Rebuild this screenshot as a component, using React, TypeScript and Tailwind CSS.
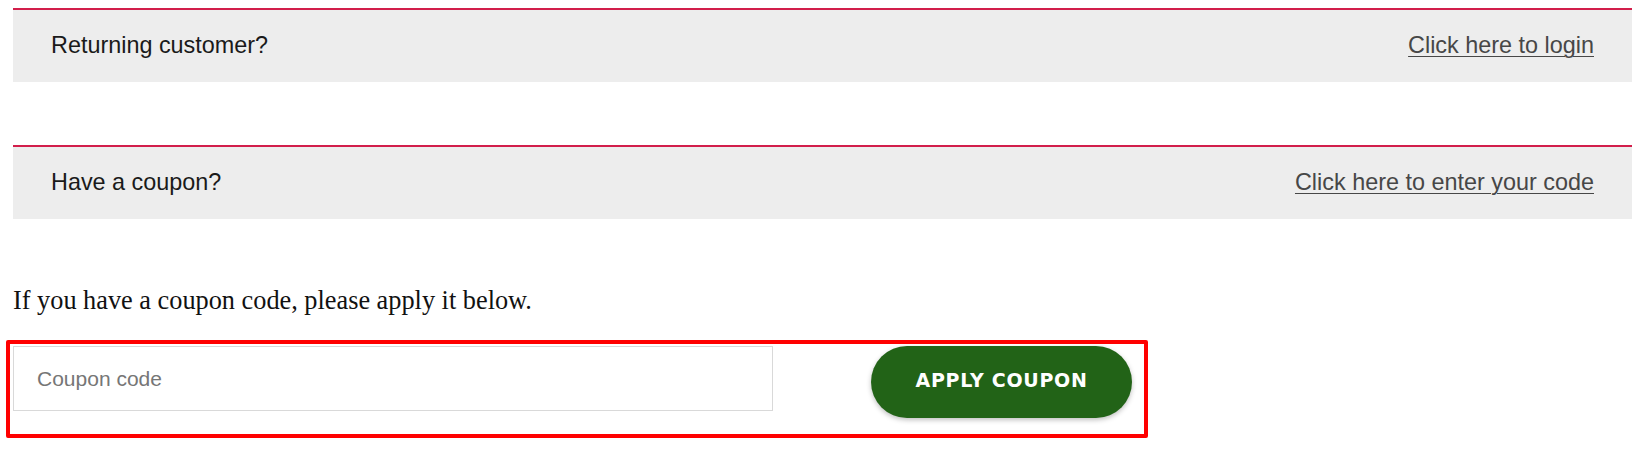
import React from "react"

type NoticeProps = {
  label: string
  action: string
}

// WooCommerce-style notice bar with a crimson top rule
function Notice({ label, action }: NoticeProps) {
  return (
    <div className="flex h-[74px] items-center justify-between border-t-2 border-[#d21e4b] bg-[#ededed] px-[38px] font-['Liberation_Sans',Arial,sans-serif] text-[23.4px]">
      <span className="text-[#1a1a1a]">{label}</span>
      <a href="#" className="text-[#474747] underline decoration-1 underline-offset-[3px]">
        {action}
      </a>
    </div>
  )
}

export default function App() {
  return (
    <div className="h-[472px] w-[1640px] bg-white pl-[13px] pr-[8px] pt-[8px]">
      <Notice label="Returning customer?" action="Click here to login" />

      <div className="mt-[63px]">
        <Notice label="Have a coupon?" action="Click here to enter your code" />
      </div>

      <p className="mt-[67px] font-['Liberation_Serif','Times_New_Roman',serif] text-[26.3px] leading-[30px] text-[#111]">
        If you have a coupon code, please apply it below.
      </p>

      <form className="relative mt-[30px] flex w-fit items-start" onSubmit={(e) => e.preventDefault()}>
        <input
          type="text"
          placeholder="Coupon code"
          className="h-[65px] w-[760px] border border-[#d9d9d9] bg-white pl-[23px] font-['Liberation_Sans',Arial,sans-serif] text-[21px] text-[#333] outline-none placeholder:text-[#767676]"
        />
        <button
          type="submit"
          className="ml-[98px] h-[72px] w-[261px] rounded-full bg-[#226317] pb-[4px] font-['DejaVu_Sans',sans-serif] text-[19px] font-bold tracking-[0.7px] text-white shadow-[0_2px_5px_rgba(0,0,0,0.25)]"
        >
          APPLY COUPON
        </button>

        {/* highlight frame around the coupon form */}
        <div className="pointer-events-none absolute -bottom-[20px] -left-[7px] -right-[16px] -top-[6px] rounded-[2px] border-4 border-[#ff0000]" />
      </form>
    </div>
  )
}
